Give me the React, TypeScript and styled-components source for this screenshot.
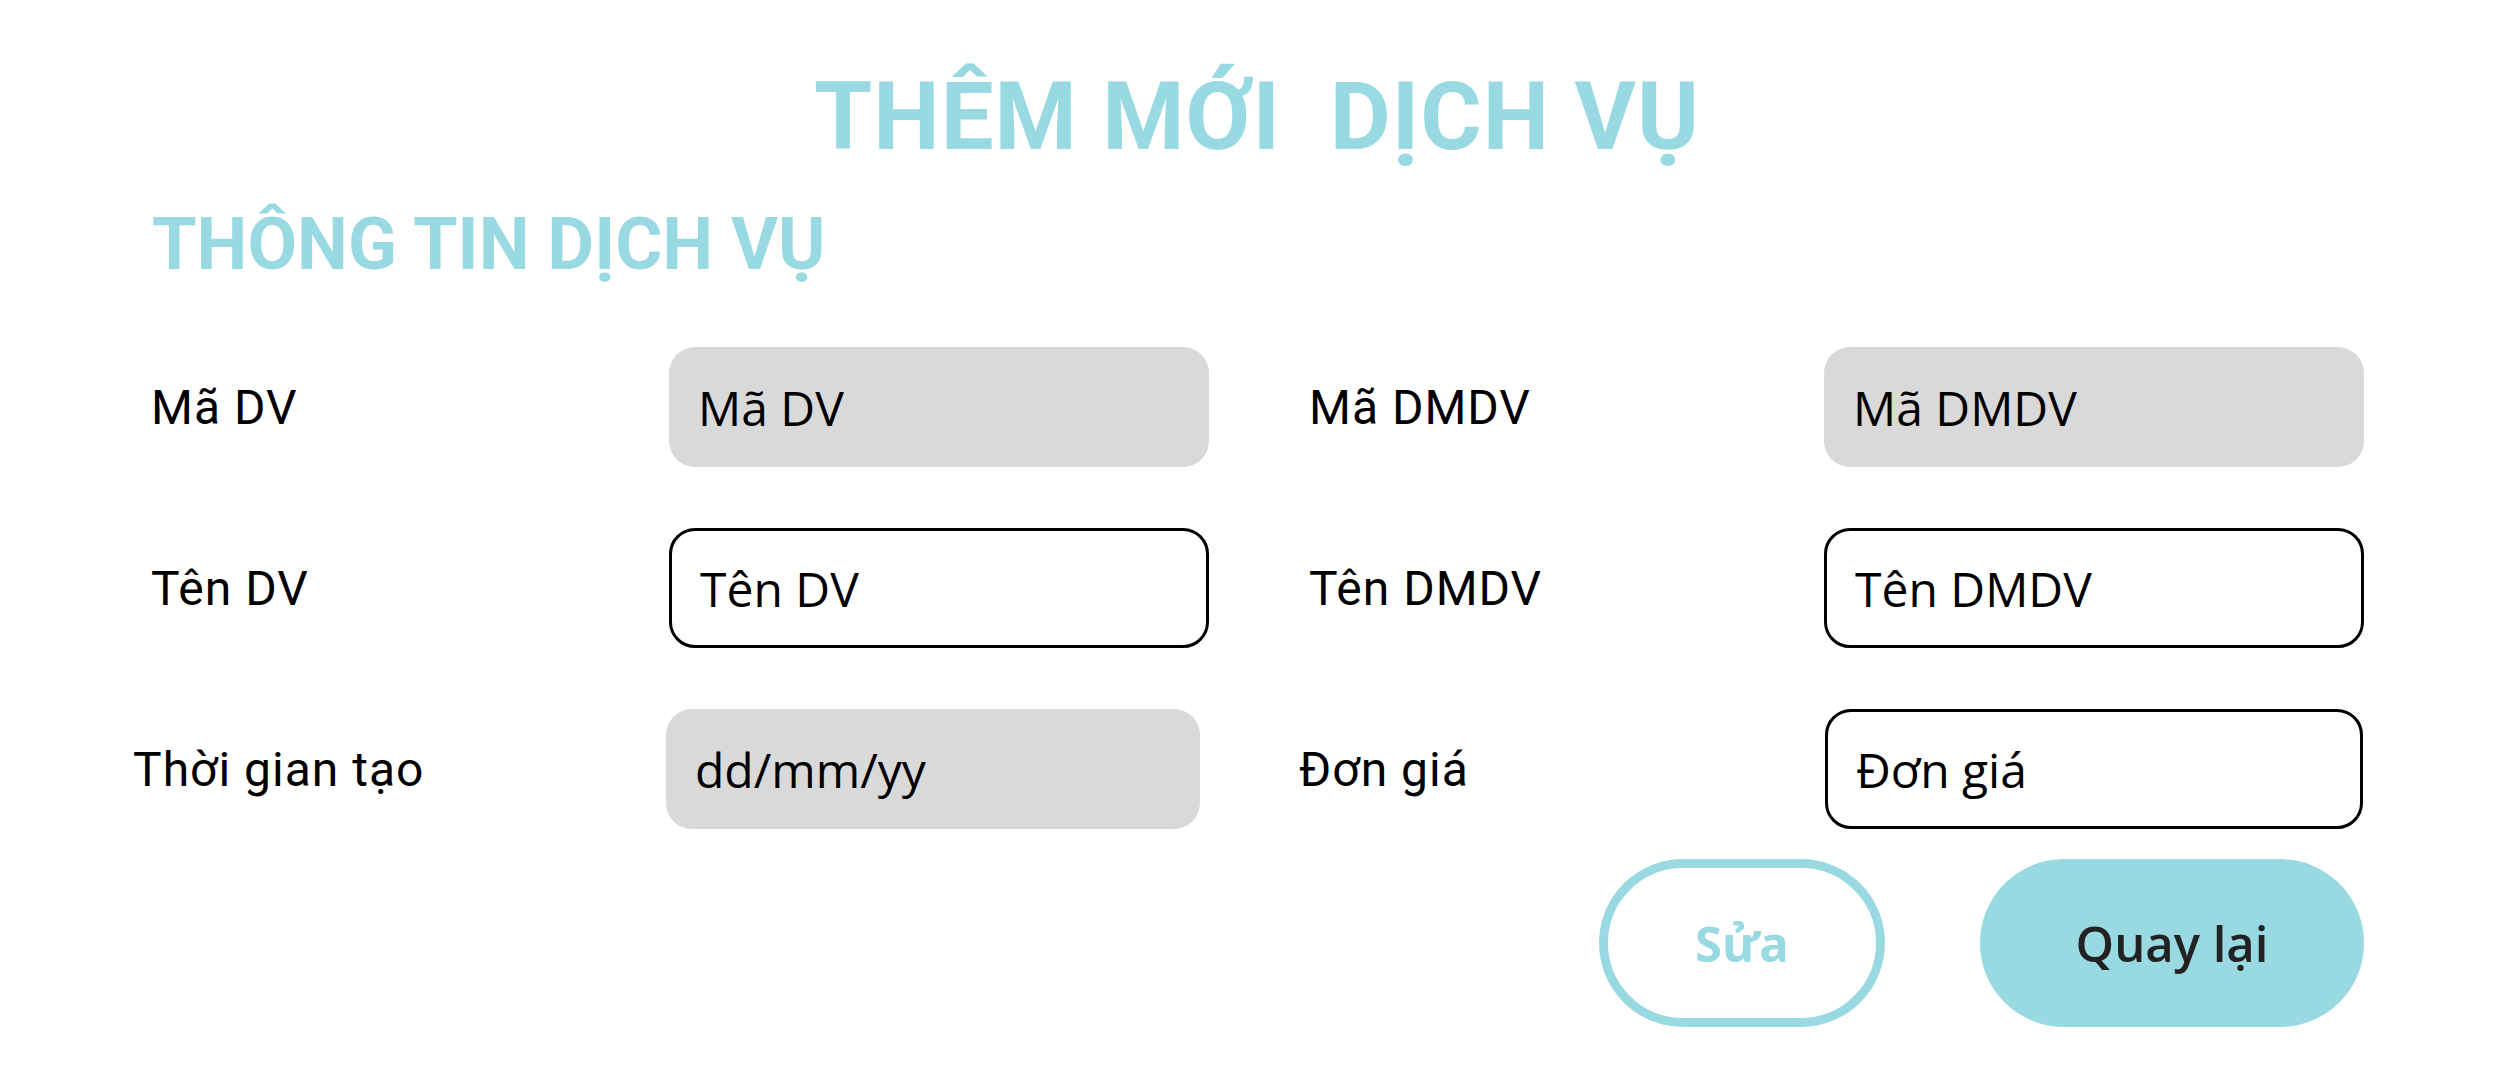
import React from "react";
import styled, { createGlobalStyle } from "styled-components";

const CYAN = "#98D9E2";

const Global = createGlobalStyle`
  html, body { margin: 0; padding: 0; background: #ffffff; }
  body { font-family: Roboto, "Noto Sans", sans-serif; }
  * { box-sizing: border-box; }
`;

const Page = styled.main`
  width: 2514px;
  min-height: 1086px;
  padding-top: 62px;
  display: flex;
  flex-direction: column;
`;

const Title = styled.h1`
  margin: 0;
  text-align: center;
  font-family: Roboto, sans-serif;
  font-weight: 700;
  font-size: 94px;
  line-height: 110px;
  color: ${CYAN};
  white-space: pre;
  letter-spacing: 1px;
`;

const Subtitle = styled.h2`
  margin: 31px 0 0 152px;
  font-family: Roboto, sans-serif;
  font-weight: 700;
  font-size: 72px;
  line-height: 84px;
  color: ${CYAN};
`;

const Form = styled.section`
  margin-top: 60px;
  display: flex;
  flex-direction: column;
  gap: 61px;
`;

const Row = styled.div<{ $indent: number; $gap: number }>`
  display: flex;
  padding-left: ${(p) => p.$indent}px;
  gap: ${(p) => p.$gap}px;
  height: 120px;
`;

const Field = styled.div<{ $label: number; $input: number }>`
  display: grid;
  grid-template-columns: ${(p) => p.$label}px ${(p) => p.$input}px;
  align-items: center;
`;

const Label = styled.label`
  font-family: Roboto, sans-serif;
  font-size: 48px;
  font-weight: 400;
  letter-spacing: 1px;
  color: #000;
`;

const Input = styled.div<{ $filled?: boolean }>`
  height: 120px;
  display: flex;
  align-items: center;
  padding-left: ${(p) => (p.$filled ? 29 : 28)}px;
  border-radius: 26px;
  background: ${(p) => (p.$filled ? "#D9D9D9" : "#ffffff")};
  border: ${(p) => (p.$filled ? "none" : "3px solid #000")};
  font-family: "Open Sans", "Noto Sans", sans-serif;
  font-size: 48px;
  color: #000;
`;

const Actions = styled.div`
  margin-top: 30px;
  display: flex;
  justify-content: flex-end;
  gap: 95px;
  padding-right: 150px;
`;

const Button = styled.button<{ $primary?: boolean }>`
  height: 168px;
  width: ${(p) => (p.$primary ? 384 : 286)}px;
  border-radius: 84px;
  border: ${(p) => (p.$primary ? "none" : `9px solid ${CYAN}`)};
  background: ${(p) => (p.$primary ? CYAN : "#ffffff")};
  color: ${(p) => (p.$primary ? "#222222" : CYAN)};
  font-family: "Open Sans", sans-serif;
  font-weight: ${(p) => (p.$primary ? 600 : 700)};
  font-size: 49px;
  display: flex;
  align-items: center;
  justify-content: center;
  padding: 0;
  cursor: pointer;
`;

export default function App() {
  return (
    <>
      <Global />
      <Page>
        <Title>{"THÊM MỚI  DỊCH VỤ"}</Title>
        <Subtitle>THÔNG TIN DỊCH VỤ</Subtitle>
        <Form>
          <Row $indent={151} $gap={100}>
            <Field $label={518} $input={540}>
              <Label>Mã DV</Label>
              <Input $filled>Mã DV</Input>
            </Field>
            <Field $label={515} $input={540}>
              <Label>Mã DMDV</Label>
              <Input $filled>Mã DMDV</Input>
            </Field>
          </Row>
          <Row $indent={151} $gap={100}>
            <Field $label={518} $input={540}>
              <Label>Tên DV</Label>
              <Input>Tên DV</Input>
            </Field>
            <Field $label={515} $input={540}>
              <Label>Tên DMDV</Label>
              <Input>Tên DMDV</Input>
            </Field>
          </Row>
          <Row $indent={133} $gap={99}>
            <Field $label={533} $input={534}>
              <Label>Thời gian tạo</Label>
              <Input $filled>dd/mm/yy</Input>
            </Field>
            <Field $label={526} $input={538}>
              <Label>Đơn giá</Label>
              <Input>Đơn giá</Input>
            </Field>
          </Row>
        </Form>
        <Actions>
          <Button>Sửa</Button>
          <Button $primary>Quay lại</Button>
        </Actions>
      </Page>
    </>
  );
}
